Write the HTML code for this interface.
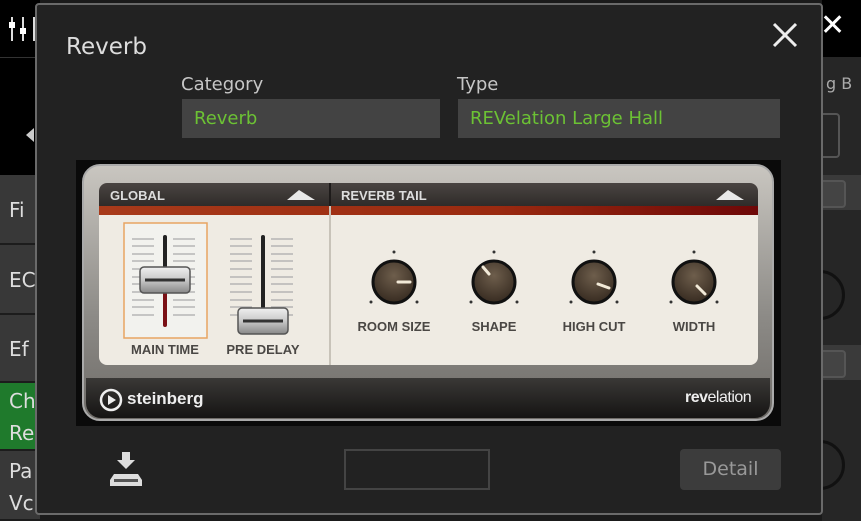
<!DOCTYPE html>
<html><head><meta charset="utf-8"><style>
*{margin:0;padding:0;box-sizing:border-box}
body{width:861px;height:521px;overflow:hidden;background:#1a1a1a;font-family:"DejaVu Sans","Liberation Sans",sans-serif;position:relative}
.a{position:absolute}
.row{position:absolute;left:0;width:40px;background:#383838;border-bottom:2px solid #1c1c1c;color:#ddd;font-size:20px;padding-left:9px}
.lbl{color:#c6c6c6;font-size:18px}
.fld{background:#434343;color:#6cc234;font-size:18px;padding:9px 12px;height:39px}
</style></head><body>
<div class="a" style="left:0;top:0;width:40px;height:175px;background:#000"></div>
<div class="a" style="left:0;top:57px;width:40px;height:1px;background:#333"></div>
<svg class="a" style="left:6px;top:14px" width="30" height="30"><g stroke="#ddd" stroke-width="2"><line x1="6" y1="3" x2="6" y2="27"/><line x1="17" y1="3" x2="17" y2="27"/><line x1="28" y1="3" x2="28" y2="27"/></g><rect x="3" y="8" width="6" height="6" fill="#fff"/><rect x="14" y="14" width="6" height="6" fill="#fff"/></svg>
<svg class="a" style="left:24px;top:128px" width="10" height="14"><polygon points="10,0 10,14 2,7" fill="#ccc"/></svg>
<div class="row" style="top:175px;height:70px;line-height:70px">Fi</div>
<div class="row" style="top:245px;height:70px;line-height:70px">EC</div>
<div class="row" style="top:315px;height:68px;line-height:68px">Ef</div>
<div class="row" style="top:383px;height:68px;background:#1f7a2c;line-height:32px;padding-top:2px">Ch<br>Re</div>
<div class="row" style="top:451px;height:70px;line-height:32px;padding-top:4px">Pa<br>Vc</div>
<div class="a" style="left:822px;top:0;width:39px;height:57px;background:#000"></div>
<div class="a" style="left:822px;top:57px;width:39px;height:464px;background:#262626"></div>
<div class="a" style="top:8px;color:#fff;font-size:30px;left:820px">✕</div>
<div class="a" style="left:826px;top:74px;color:#aaa;font-size:16px">g B</div>
<div class="a" style="left:812px;top:113px;width:28px;height:45px;border:2px solid #555;border-radius:4px"></div>
<div class="a" style="left:822px;top:175px;width:39px;height:35px;background:#3a3a3a"></div>
<div class="a" style="left:812px;top:180px;width:34px;height:28px;border:2px solid #555;border-radius:4px;background:#444"></div>
<div class="a" style="left:822px;top:345px;width:39px;height:35px;background:#3a3a3a"></div>
<div class="a" style="left:812px;top:350px;width:34px;height:28px;border:2px solid #555;border-radius:4px;background:#444"></div>
<div class="a" style="left:795px;top:270px;width:50px;height:50px;border:3px solid #111;border-radius:50%"></div>
<div class="a" style="left:795px;top:440px;width:50px;height:50px;border:3px solid #111;border-radius:50%"></div>
<div class="a" style="left:35px;top:3px;width:788px;height:512px;background:#222;border:2px solid #6a6a6a;border-radius:4px"></div>
<div class="a" style="left:66px;top:34px;color:#ddd;font-size:23px">Reverb</div>
<svg class="a" style="left:772px;top:22px" width="26" height="26"><g stroke="#eee" stroke-width="3"><line x1="2" y1="2" x2="24" y2="24"/><line x1="24" y1="2" x2="2" y2="24"/></g></svg>
<div class="a lbl" style="left:181px;top:74px">Category</div>
<div class="a lbl" style="left:457px;top:74px">Type</div>
<div class="a fld" style="left:182px;top:99px;width:258px">Reverb</div>
<div class="a fld" style="left:458px;top:99px;width:322px">REVelation Large Hall</div>
<div class="a" style="left:76px;top:160px;width:705px;height:266px;background:#0a0a0a"></div>
<div class="a" style="left:82px;top:164px;width:692px;height:257px;border-radius:18px;background:linear-gradient(#c9c6c0,#8c8a86 60%,#6f6c68);border:2px solid #aaa"></div>
<div class="a" style="left:86px;top:378px;width:684px;height:40px;border-radius:0 0 15px 15px;background:linear-gradient(#3a3836,#151413)"></div>
<div class="a" style="left:99px;top:183px;width:659px;height:182px;border-radius:8px;background:#efebe3;overflow:hidden">
 <div style="height:23px;background:linear-gradient(#4a4542,#2f2b29)"></div>
 <div style="height:9px;background:linear-gradient(90deg,#a83a1a,#9a2a10 60%,#6e0808)"></div>
</div>
<div class="a" style="left:329px;top:183px;width:2px;height:182px;background:#c8c3b9"></div>
<div class="a" style="left:329px;top:183px;width:2px;height:23px;background:#1e1b1a"></div>
<div class="a" style="left:110px;top:188px;color:#ddd;font:bold 13px 'Liberation Sans',sans-serif">GLOBAL</div>
<div class="a" style="left:341px;top:188px;color:#ddd;font:bold 13px 'Liberation Sans',sans-serif">REVERB TAIL</div>
<svg class="a" style="left:285px;top:188px" width="32" height="14"><polygon points="2,12 14,2 30,12" fill="#e8e8e8"/></svg>
<svg class="a" style="left:714px;top:188px" width="32" height="14"><polygon points="2,12 14,2 30,12" fill="#e8e8e8"/></svg>
<svg class="a" style="left:99px;top:215px" width="659" height="150" font-family="Liberation Sans" font-weight="bold" font-size="13" fill="#4a4744">
 <rect x="25" y="8" width="83" height="115" fill="#f2f2ee" stroke="#e8a462" stroke-width="1.5"/>
 <g stroke="#aaa" stroke-width="1.3">
  <path d="M33 24h22M33 31h22M33 39h22M33 46h22M33 54h22M33 62h22M33 69h22M33 77h22M33 85h22M33 92h22M33 100h22M74 24h22M74 31h22M74 39h22M74 46h22M74 54h22M74 62h22M74 69h22M74 77h22M74 85h22M74 92h22M74 100h22"/>
  <path d="M131 24h22M131 31h22M131 39h22M131 46h22M131 54h22M131 62h22M131 69h22M131 77h22M131 85h22M131 92h22M131 100h22M172 24h22M172 31h22M172 39h22M172 46h22M172 54h22M172 62h22M172 69h22M172 77h22M172 85h22M172 92h22M172 100h22"/>
 </g>
 <line x1="66" y1="22" x2="66" y2="60" stroke="#222" stroke-width="4" stroke-linecap="round"/>
 <line x1="66" y1="60" x2="66" y2="110" stroke="#7a1015" stroke-width="4" stroke-linecap="round"/>
 <rect x="41" y="52" width="50" height="26" rx="4" fill="url(#h)" stroke="#555" stroke-width="1.5"/>
 <line x1="46" y1="65" x2="86" y2="65" stroke="#333" stroke-width="3"/>
 <line x1="164" y1="22" x2="164" y2="100" stroke="#222" stroke-width="4" stroke-linecap="round"/>
 <rect x="139" y="93" width="50" height="26" rx="4" fill="url(#h)" stroke="#555" stroke-width="1.5"/>
 <line x1="144" y1="106" x2="184" y2="106" stroke="#333" stroke-width="3"/>
 <defs><linearGradient id="h" x1="0" y1="0" x2="0" y2="1"><stop offset="0" stop-color="#f0f0f0"/><stop offset="0.5" stop-color="#c8c8c8"/><stop offset="1" stop-color="#888"/></linearGradient>
 <radialGradient id="k" cx="0.5" cy="0.35" r="0.6"><stop offset="0" stop-color="#6e5e4c"/><stop offset="1" stop-color="#3b2f24"/></radialGradient></defs>
 <text x="66" y="139" text-anchor="middle">MAIN TIME</text>
 <text x="164" y="139" text-anchor="middle">PRE DELAY</text>
 <g fill="#333">
  <circle cx="295" cy="37" r="1.5"/><circle cx="272" cy="87" r="1.5"/><circle cx="318" cy="87" r="1.5"/>
  <circle cx="395" cy="37" r="1.5"/><circle cx="372" cy="87" r="1.5"/><circle cx="418" cy="87" r="1.5"/>
  <circle cx="495" cy="37" r="1.5"/><circle cx="472" cy="87" r="1.5"/><circle cx="518" cy="87" r="1.5"/>
  <circle cx="595" cy="37" r="1.5"/><circle cx="572" cy="87" r="1.5"/><circle cx="618" cy="87" r="1.5"/>
 </g>
 <g stroke="#111" stroke-width="3" fill="url(#k)">
  <circle cx="295" cy="67" r="21"/><circle cx="395" cy="67" r="21"/><circle cx="495" cy="67" r="21"/><circle cx="595" cy="67" r="21"/>
 </g>
 <g stroke="#f2ead8" stroke-width="3" stroke-linecap="round">
  <line x1="299" y1="67" x2="311" y2="67"/>
  <line x1="390" y1="59" x2="384" y2="52"/>
  <line x1="499" y1="69" x2="510" y2="73"/>
  <line x1="598" y1="71" x2="606" y2="79"/>
 </g>
 <text x="295" y="116" text-anchor="middle">ROOM SIZE</text>
 <text x="395" y="116" text-anchor="middle">SHAPE</text>
 <text x="495" y="116" text-anchor="middle">HIGH CUT</text>
 <text x="595" y="116" text-anchor="middle">WIDTH</text>
</svg>
<svg class="a" style="left:99px;top:388px" width="24" height="24"><circle cx="12" cy="12" r="10" fill="none" stroke="#eee" stroke-width="2.5"/><polygon points="9,7 17,12 9,17" fill="#eee"/></svg>
<div class="a" style="left:127px;top:389px;color:#eee;font:bold 17px 'Liberation Sans',sans-serif">steinberg</div>
<div class="a" style="left:685px;top:389px;color:#eee;font:16px 'Liberation Sans',sans-serif;letter-spacing:-0.5px"><b>rev</b>elation</div>
<svg class="a" style="left:108px;top:450px" width="38" height="38"><rect x="14" y="2" width="8" height="8" fill="#ddd"/><polygon points="9,10 27,10 18,19" fill="#ddd"/><path d="M6 24h24l4 6v6H2v-6z" fill="#ddd"/><rect x="6" y="29" width="24" height="3" fill="#555"/></svg>
<div class="a" style="left:344px;top:449px;width:146px;height:41px;border:2px solid #444"></div>
<div class="a" style="left:680px;top:449px;width:101px;height:41px;background:#3c3c3c;border-radius:4px;color:#999;font-size:19px;text-align:center;line-height:41px">Detail</div>
</body></html>
